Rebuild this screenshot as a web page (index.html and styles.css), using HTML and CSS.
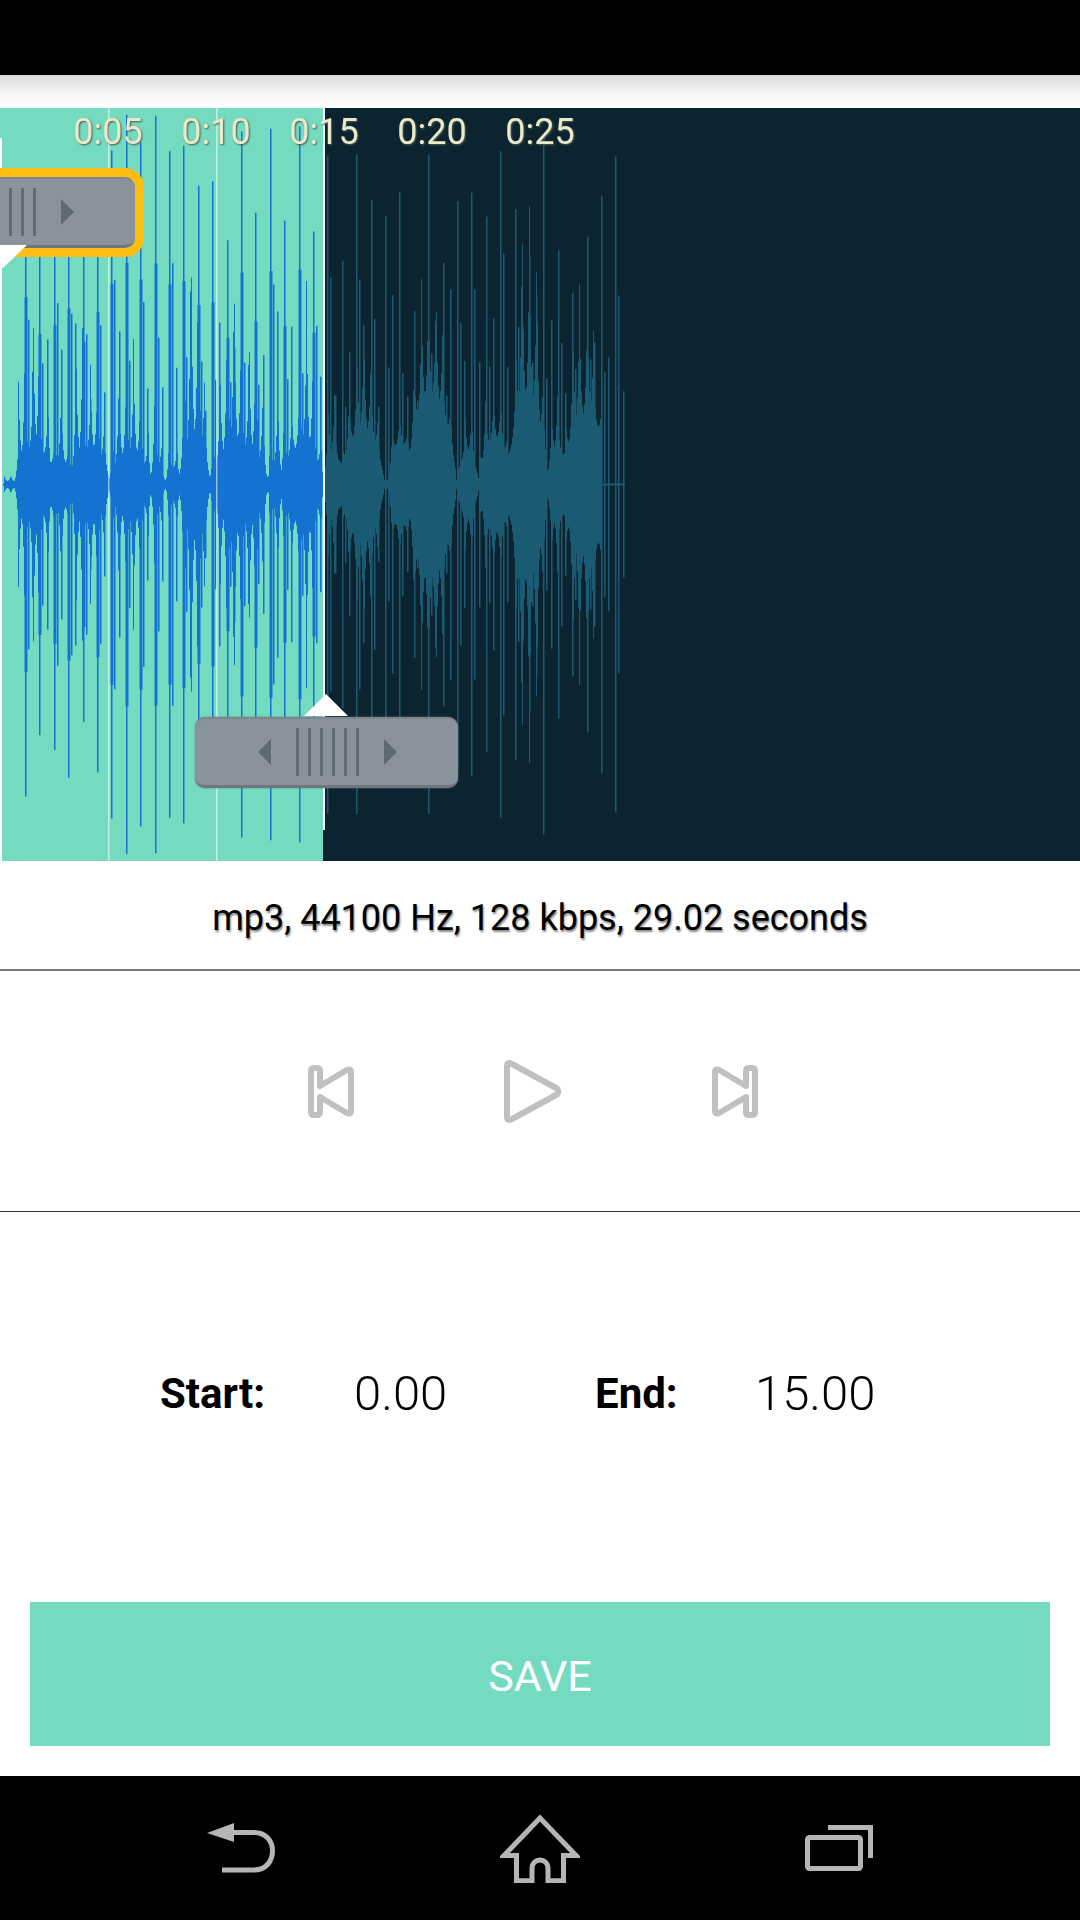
FILE: index.html
```html
<!DOCTYPE html>
<html lang="en">
<head>
    <meta charset="UTF-8">
    <meta name="viewport" content="width=device-width, initial-scale=1.0">
    <title>Ringtone Editor</title>
    <link rel="stylesheet" href="styles.css">
</head>
<body>
    <div class="status-bar"></div>
    <div class="action-shadow"></div>

    <div class="waveform">
        <div class="selection"></div>
        <canvas id="wave" width="1080" height="753"></canvas>
        <div class="marker marker-start"></div>
        <div class="marker marker-end"></div>
        <div class="timeline">
            <span>0:05</span>
            <span>0:10</span>
            <span>0:15</span>
            <span>0:20</span>
            <span>0:25</span>
        </div>
        <div class="handle handle-start">
            <i class="arrow arrow-left"></i>
            <div class="grip"><b></b><b></b><b></b><b></b><b></b><b></b></div>
            <i class="arrow arrow-right"></i>
        </div>
        <div class="handle handle-end">
            <i class="arrow arrow-left"></i>
            <div class="grip"><b></b><b></b><b></b><b></b><b></b><b></b></div>
            <i class="arrow arrow-right"></i>
        </div>
    </div>

    <div class="info">mp3, 44100 Hz, 128 kbps, 29.02 seconds</div>

    <div class="controls">
        <svg class="skip" viewBox="0 0 46 53">
            <path d="M12 21V6Q12 3 9 3H6Q3 3 3 6V47Q3 50 6 50H9Q12 50 12 47V32L38 47.500Q43 50 43 46V7Q43 3 38 5.500Z"/>
        </svg>
        <svg class="play" viewBox="0 0 58 63">
            <path d="M3 6Q3 1.500 8 4L53 28.500Q55.500 31.500 53 34.500L8 59Q3 61.500 3 57Z"/>
        </svg>
        <svg class="skip" viewBox="0 0 46 53">
            <path d="M34 21V6Q34 3 37 3H40Q43 3 43 6V47Q43 50 40 50H37Q34 50 34 47V32L8 47.500Q3 50 3 46V7Q3 3 8 5.500Z"/>
        </svg>
    </div>

    <div class="fields">
        <span class="field-label label-start">Start:</span>
        <span class="field-value value-start">0.00</span>
        <span class="field-label label-end">End:</span>
        <span class="field-value">15.00</span>
    </div>

    <button class="save">SAVE</button>

    <div class="nav-bar">
        <svg class="nav-back" viewBox="0 0 68 50">
            <path class="solid" d="M0 10L27 0V19Z"/>
            <path d="M25 9.5H47C59 9.5 65.500 18 65.500 28C65.500 38 59 47 47 47H15"/>
        </svg>
        <svg class="nav-home" viewBox="0 0 80 69">
            <path d="M40 4L4 41.500H16.500V66.700H32V54A8 8 0 0 1 48 54V66.700H63.500V41.500H76Z"/>
        </svg>
        <svg class="nav-recent" viewBox="0 0 68 46">
            <rect x="2.500" y="12.500" width="53" height="31" rx="2"/>
            <path d="M23 2.500H65.500V33"/>
        </svg>
    </div>

    <script src="waveform.js"></script>
</body>
</html>
```

FILE: styles.css
```css
* {
    box-sizing: border-box;
}

body {
    font-family: Roboto, "Liberation Sans", sans-serif;
    background-color: #fff;
    color: #000;
    width: 1080px;
    height: 1920px;
    margin: 0;
    overflow: hidden;
    display: flex;
    flex-direction: column;
}

.status-bar {
    height: 75px;
    background-color: #000;
}

.action-shadow {
    height: 33px;
    background: linear-gradient(#dcdcdc, #f6f6f6 55%, #fff);
}

.waveform {
    position: relative;
    height: 753px;
    background-color: #0c2430;
    overflow: hidden;
}

.selection {
    position: absolute;
    left: 0;
    top: 0;
    width: 323px;
    height: 100%;
    background-color: #75dbc0;
}

#wave {
    position: absolute;
    left: 0;
    top: 0;
}

.marker {
    position: absolute;
    width: 2px;
    background-color: #fff;
}

.marker-start {
    left: 0;
    top: 30px;
    bottom: 0;
}

.marker-end {
    left: 323px;
    top: 0;
    height: 722px;
}

.timeline {
    position: absolute;
    left: 54px;
    top: 0;
    display: flex;
}

.timeline span {
    width: 108px;
    line-height: 49px;
    text-align: center;
    font-size: 36px;
    color: #e9e9cb;
    text-shadow: 1px 1px 2px #4d5a4e;
}

.handle {
    position: absolute;
    width: 263px;
    height: 71px;
    padding-left: 2px;
    display: flex;
    justify-content: center;
    align-items: center;
    gap: 25px;
    background-color: #8a929c;
    border-radius: 10px;
    border-bottom: 3px solid #6f767f;
    border-top: 2px solid #7d858e;
}

.handle::after {
    content: "";
    position: absolute;
    left: 109px;
    border-left: 22px solid transparent;
    border-right: 22px solid transparent;
}

.handle-start {
    left: -128px;
    top: 69px;
    box-shadow: 0 0 0 9px #fdbe13;
}

.handle-start::after {
    left: 107px;
    top: 66px;
    border-left-width: 24px;
    border-right-width: 24px;
    border-top: 23px solid #fff;
}

.handle-end {
    left: 195px;
    top: 609px;
    box-shadow: 0 0 2px #6f767f;
}

.handle-end::after {
    bottom: 69px;
    border-bottom: 22px solid #fff;
}

.grip {
    display: flex;
    gap: 9px;
}

.grip b {
    width: 3px;
    height: 48px;
    background-color: #5f6a74;
}

.arrow {
    width: 0;
    height: 0;
    border-top: 13px solid transparent;
    border-bottom: 13px solid transparent;
}

.arrow-left {
    border-right: 13px solid #5f6a74;
}

.arrow-right {
    border-left: 13px solid #5f6a74;
}

.info {
    height: 110px;
    padding-top: 6px;
    display: flex;
    justify-content: center;
    align-items: center;
    font-size: 36px;
    text-shadow: 1px 2px 2px #888;
    border-bottom: 2px solid #777;
}

.controls {
    height: 241px;
    padding-right: 15px;
    display: flex;
    justify-content: center;
    align-items: center;
    gap: 150px;
    border-bottom: 1px solid #333;
}

.controls svg {
    fill: none;
    stroke: #c0c0c0;
    stroke-width: 6;
    stroke-linejoin: round;
}

.skip {
    width: 46px;
    height: 53px;
}

.play {
    width: 58px;
    height: 63px;
}

.fields {
    height: 390px;
    padding: 0 0 28px 160px;
    display: flex;
    align-items: center;
}

.field-label {
    font-size: 42px;
    font-weight: 700;
}

.field-value {
    font-size: 49px;
    font-weight: 300;
}

.label-start {
    width: 194px;
}

.value-start {
    width: 241px;
}

.label-end {
    width: 160px;
}

.save {
    display: block;
    height: 144px;
    margin: 0 30px 30px;
    padding-top: 4px;
    border: none;
    background-color: #75dbc0;
    color: #fff;
    font-family: inherit;
    font-size: 43px;
}

.nav-bar {
    height: 144px;
    background-color: #000;
    display: grid;
    grid-template-columns: repeat(3, 299px);
    justify-content: center;
    justify-items: center;
    align-items: center;
}

.nav-bar svg {
    fill: none;
    stroke: #b5b5b5;
    stroke-width: 5;
}

.nav-bar .solid {
    fill: #b5b5b5;
    stroke: none;
}

.nav-back {
    width: 68px;
    height: 50px;
}

.nav-home {
    width: 80px;
    height: 69px;
}

.nav-recent {
    width: 68px;
    height: 46px;
}
```

FILE: waveform.js
```js
// fake audio data: spikes every 14.4px on top of loudness bursts
var canvas = document.getElementById('wave');
var ctx = canvas.getContext('2d');
var mid = 376.5;
var seed = 29;
var period = 14.4;

// [from, to, height]
var bursts = [
    [14, 54, 34], [52, 70, 22], [68, 110, 32], [108, 151, 28], [149, 163, 16],
    [165, 180, 14], [178, 210, 38], [208, 268, 34], [268, 283, 18], [279, 323, 36],
    [323, 343, 30], [340, 384, 52], [388, 412, 42], [406, 456, 85], [456, 478, 30],
    [478, 512, 44], [506, 548, 78], [546, 568, 34], [561, 612, 66], [608, 625, 22]
];

function rand() {
    seed = (seed * 16807) % 2147483647;
    return seed / 2147483647;
}

function envelope(x) {
    var level = 3;
    for (var i = 0; i < bursts.length; i++) {
        var b = bursts[i];
        if (x >= b[0] && x <= b[1]) {
            var t = (x - b[0]) / (b[1] - b[0]);
            level = Math.max(level, b[2] * Math.pow(Math.sin(t * Math.PI), 0.7));
        }
    }
    return level;
}

function column(x, width, half) {
    ctx.fillStyle = x < 323 ? '#1473d0' : '#1b5a73';
    ctx.fillRect(x, mid - half, width, half * 2);
}

function drawWave() {
    // thin centre line
    ctx.fillStyle = '#1473d0';
    ctx.fillRect(3, mid - 1, 320, 2);
    ctx.fillStyle = '#1b5a73';
    ctx.fillRect(323, mid - 1, 302, 2);

    // the teeth of each burst, two to a period
    var peaks = [];
    for (var p = 0; p < 100; p++) {
        peaks.push(0.6 + rand() * 3);
    }
    for (var x = 4; x < 625; x++) {
        var q = (x - 25 + period * 10) % (period / 2);
        var n = Math.floor((x - 25 + period * 10) / (period / 2));
        var dist = Math.min(q, period / 2 - q);
        var amp = x < 323 ? peaks[n] * 2 : peaks[n] * 0.9;
        var half = envelope(x) * (1 + amp * Math.exp(-dist / 1.3));
        column(x, 1, half);
    }

    // tall spikes
    for (var s = 25; s < 620; s += period) {
        var up = s < 323 ? 225 + rand() * 150 : 150 + rand() * 200;
        var sx = Math.round(s);
        column(sx, 1.5, up);
        if (s < 323) {
            column(sx - 0.5, 3, up * 0.6);
        }
        column(sx + 3, 1.5, up * (0.3 + rand() * 0.4));
        column(Math.round(s + period / 2), 1.5, 70 + rand() * 130);
    }

    // 5 second grid lines
    ctx.fillStyle = 'rgba(255, 255, 255, 0.55)';
    ctx.fillRect(108, 0, 1.5, 753);
    ctx.fillRect(216, 0, 1.5, 753);
}

drawWave();
```
